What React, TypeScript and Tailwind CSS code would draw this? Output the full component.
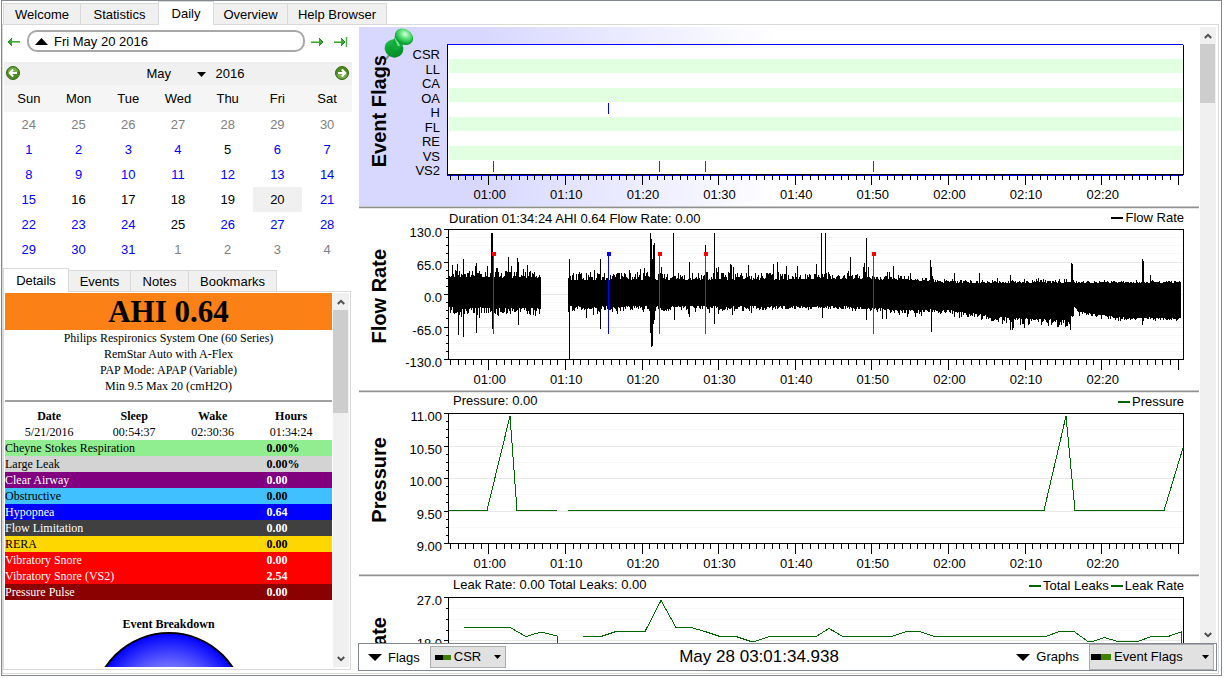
import React from 'react';

type Tab = { name: string; width: string };

const MAIN_TABS: Tab[] = [
  { name: 'Welcome', width: 'w-[78px]' },
  { name: 'Statistics', width: 'w-[79px]' },
  { name: 'Daily', width: 'w-[56px]' },
  { name: 'Overview', width: 'w-[75px]' },
  { name: 'Help Browser', width: 'w-[100px]' },
];

const DETAIL_TABS: Tab[] = [
  { name: 'Details', width: 'w-[66px]' },
  { name: 'Events', width: 'w-[63px]' },
  { name: 'Notes', width: 'w-[59px]' },
  { name: 'Bookmarks', width: 'w-[89px]' },
];

const WEEKDAYS = ['Sun', 'Mon', 'Tue', 'Wed', 'Thu', 'Fri', 'Sat'];
const TIMES = ['01:00', '01:10', '01:20', '01:30', '01:40', '01:50', '02:00', '02:10', '02:20'];
const FLAGS = ['CSR', 'LL', 'CA', 'OA', 'H', 'FL', 'RE', 'VS', 'VS2'];

const WEEKS = [
  [24, 25, 26, 27, 28, 29, 30],
  [1, 2, 3, 4, 5, 6, 7],
  [8, 9, 10, 11, 12, 13, 14],
  [15, 16, 17, 18, 19, 20, 21],
  [22, 23, 24, 25, 26, 27, 28],
  [29, 30, 31, 1, 2, 3, 4],
];

// days of the month without any recorded session
const EMPTY_DAYS = [5, 16, 17, 18, 19, 20, 25];

const EVENTS = [
  { name: 'Cheyne Stokes Respiration', value: '0.00%', style: 'bg-[#90ee90] text-black' },
  { name: 'Large Leak', value: '0.00%', style: 'bg-[#d3d3d3] text-black' },
  { name: 'Clear Airway', value: '0.00', style: 'bg-[#800080] text-white' },
  { name: 'Obstructive', value: '0.00', style: 'bg-[#40c0ff] text-black' },
  { name: 'Hypopnea', value: '0.64', style: 'bg-[#0000ff] text-white' },
  { name: 'Flow Limitation', value: '0.00', style: 'bg-[#404040] text-white' },
  { name: 'RERA', value: '0.00', style: 'bg-[#ffd700] text-black' },
  { name: 'Vibratory Snore', value: '0.00', style: 'bg-[#ff0000] text-white' },
  { name: 'Vibratory Snore (VS2)', value: '2.54', style: 'bg-[#ff0000] text-white' },
  { name: 'Pressure Pulse', value: '0.00', style: 'bg-[#8b0000] text-white' },
];

const SNORES = [45, 211, 257, 425];
const HYPOPNEA = 160;

// [x, top, bottom, top jitter, bottom jitter]
const ENVELOPE = [
  [0, 47, 78, 7, 7],
  [92, 48, 79, 7, 7],
  [120, 50, 77, 8, 6],
  [300, 50, 77, 8, 5],
  [390, 49, 77, 5, 3],
  [460, 50, 81, 5, 4],
  [495, 53, 80, 3, 4],
  [550, 53, 88, 3, 7],
  [620, 53, 91, 3, 8],
  [626, 53, 78, 3, 10],
  [632, 53, 83, 2, 3],
  [670, 53, 88, 2, 4],
  [733, 53, 89, 2, 2],
];

const PEAKS: Record<number, number> = {
  9: 35, 15: 30, 28: 34, 43: 4, 44: 4, 49: 39, 60: 28, 69: 29, 70: 33, 121: 30, 152: 30,
  202: 4, 203: 10, 204: 30, 205: 16, 206: 14, 225: 4, 241: 33, 257: 16, 266: 4, 282: 35,
  283: 36, 300: 36, 325: 35, 329: 33, 338: 37, 349: 37, 368: 35, 373: 4, 377: 4, 402: 28,
  415: 38, 416: 34, 418: 9, 420: 38, 445: 37, 482: 31, 483: 38, 506: 44, 531: 44, 562: 46,
  623: 34, 624: 35, 694: 30, 695: 32, 702: 46,
};

const DIPS: Record<number, number> = {
  10: 106, 15: 108, 28: 104, 44: 100, 70: 96, 121: 130, 138: 89, 152: 100, 202: 104, 203: 118,
  204: 117, 205: 95, 206: 91, 226: 91, 241: 88, 266: 95, 374: 89, 418: 91, 434: 90, 438: 90,
  483: 103, 562: 101, 564: 101, 576: 99, 622: 101, 672: 92, 694: 96,
};

function buildFlow(from: number, to: number) {
  let seed = 17 + from;
  const rnd = () => {
    seed = (seed * 1103515245 + 12345) % 2147483648;
    return seed / 2147483648;
  };
  let d = '';
  for (let x = from; x < to; x++) {
    let i = 0;
    while (i < ENVELOPE.length - 2 && ENVELOPE[i + 1][0] <= x) i++;
    const a = ENVELOPE[i];
    const b = ENVELOPE[i + 1];
    const t = (x - a[0]) / (b[0] - a[0]);
    const at = (k: number) => a[k] + (b[k] - a[k]) * t;
    let top = at(1) - Math.pow(rnd(), 1.5) * at(3) + 1;
    let bottom = at(2) + Math.pow(rnd(), 1.5) * at(4);
    if (rnd() > 0.9) top -= at(3) * 0.8;
    if (rnd() > 0.92) bottom += at(4) * 0.8;
    top = Math.round(PEAKS[x] ?? top);
    bottom = Math.round(DIPS[x] ?? bottom);
    d += `M${x} ${top}h1V${bottom}h-1z`;
  }
  return d;
}

const FLOW = buildFlow(1, 93) + buildFlow(120, 733);

const PRESSURE = [
  'M0 97.5H39L62 3L69 97.5H109',
  'M120 97.5H596L618 3L627 97.5H716L735 35',
];

const LEAK = [
  'M16 30.5H62L78 39.5L93 35L109 39V48',
  'M135 39.5H153L168 34.5H197L213 3.5L228 30.5H243L257 34.5L272 39.5H288L303 44.5H307L321 39.5H368L381 31.5L395 39.5H444L458 34.5H472L486 39.5H598L611 34.5H626L640 44.5H645L656 40.5L670 44.5H690L703 39.5H720L733 35V48',
];

function TabBar({ tabs, active }: { tabs: Tab[]; active: string }) {
  return (
    <div role="tablist" className="flex items-end pl-px">
      {tabs.map(({ name, width }) =>
        name === active ? (
          <button
            key={name}
            role="tab"
            aria-selected="true"
            className={`relative -mb-px h-6 border border-b-0 border-[#d9d9d9] bg-white not-first:-ml-px ${width}`}
          >
            {name}
          </button>
        ) : (
          <button
            key={name}
            role="tab"
            aria-selected="false"
            className={`h-[21px] border border-b-0 border-[#d9d9d9] bg-[#f0f0f0] pt-px not-first:-ml-px ${width}`}
          >
            {name}
          </button>
        ),
      )}
    </div>
  );
}

function Caret({ className }: { className: string }) {
  return (
    <svg viewBox="0 0 10 5" className={className} preserveAspectRatio="none" aria-hidden="true">
      <path d="M0 0h10L5 5z" fill="#000" />
    </svg>
  );
}

function ScrollBar({ thumb }: { thumb: string }) {
  return (
    <div className="flex w-4 shrink-0 flex-col bg-[#f0f0f0]">
      <div className="flex h-[17px] items-center justify-center">
        <svg width="8" height="6" viewBox="0 0 8 6" aria-hidden="true">
          <path d="M.8 5L4 1.8 7.2 5" fill="none" stroke="#505050" strokeWidth="2" />
        </svg>
      </div>
      <div className={`mr-px bg-[#cdcdcd] ${thumb}`} />
      <div className="mt-auto flex h-[17px] items-center justify-center">
        <svg width="8" height="6" viewBox="0 0 8 6" aria-hidden="true">
          <path d="M.8 1L4 4.2 7.2 1" fill="none" stroke="#505050" strokeWidth="2" />
        </svg>
      </div>
    </div>
  );
}

function ArrowIcon({ flip, bar }: { flip?: boolean; bar?: boolean }) {
  return (
    <svg width="14" height="12" viewBox="0 0 14 12" className={flip ? 'rotate-180' : ''} aria-hidden="true">
      <path d="M1 5h8V2l4 4-4 4V7H1z" transform={bar ? 'translate(-2 0)' : undefined} fill="#3fa535" />
      <path d={bar ? 'M0 5.5h7' : 'M1 5.5h8'} stroke="#8ad873" />
      <path d={bar ? 'M7 2l4 4-4 4' : 'M9 2l4 4-4 4'} fill="none" stroke="#23862a" />
      {bar && <path d="M12.500 1v10" stroke="#55ad48" strokeWidth="1.500" />}
    </svg>
  );
}

function RoundArrow({ flip }: { flip?: boolean }) {
  return (
    <svg width="14" height="14" viewBox="0 0 14 14" className={flip ? 'rotate-180' : ''} aria-hidden="true">
      <circle cx="7" cy="7" r="6.5" fill="#4c8a22" stroke="#356b14" />
      <path d="M2 6a5 4.500 0 0 1 10 0z" fill="#79b04a" />
      <path d="M11 7H4M7.200 3.500L3.700 7l3.500 3.500" fill="none" stroke="#fff" strokeWidth="2" />
    </svg>
  );
}

function PinIcon() {
  return (
    <svg width="30" height="34" viewBox="0 0 30 34" aria-hidden="true">
      <defs>
        <radialGradient id="pinCap" cx="0.5" cy="0.35" r="0.65">
          <stop offset="0" stopColor="#dcffe0" />
          <stop offset="0.45" stopColor="#5fe37c" />
          <stop offset="1" stopColor="#0aa834" />
        </radialGradient>
        <linearGradient id="pinBody" x1="0" y1="0" x2="1" y2="0.6">
          <stop offset="0" stopColor="#35c35b" />
          <stop offset="0.5" stopColor="#0aa535" />
          <stop offset="1" stopColor="#068a28" />
        </linearGradient>
      </defs>
      <path d="M7 25L1 32" stroke="#8c8c98" strokeWidth="2" />
      <ellipse cx="10" cy="20.500" rx="9.500" ry="9" transform="rotate(35 10 20.500)" fill="url(#pinBody)" />
      <path d="M11 8l8 9-5 5c-4 1-7-2-6-5z" fill="#14a83c" />
      <path d="M11 9l4 9" stroke="#6ee68a" strokeWidth="2" />
      <ellipse cx="20" cy="9" rx="9.500" ry="7.500" transform="rotate(30 20 9)" fill="#0b9c31" />
      <ellipse cx="20" cy="8" rx="9" ry="7" transform="rotate(30 20 8)" fill="url(#pinCap)" />
    </svg>
  );
}

function Calendar() {
  return (
    <div className="ml-px">
      <div className="flex h-[23px] items-start justify-between bg-[#f0f0f0] pr-[3px] pl-0.5">
        <button aria-label="Previous month" className="pt-1">
          <RoundArrow />
        </button>
        <div className="flex items-center gap-[10px] pt-1 pl-9 leading-4">
          <span className="relative flex items-center">
            <select aria-label="Month" className="w-[59px] appearance-none bg-transparent outline-none" defaultValue="May">
              <option>May</option>
            </select>
            <Caret className="pointer-events-none absolute right-0 h-[5px] w-[9px]" />
          </span>
          <button>2016</button>
        </div>
        <button aria-label="Next month" className="pt-1">
          <RoundArrow flip />
        </button>
      </div>
      <table className="w-full table-fixed text-center">
        <thead>
          <tr className="h-[27px] bg-[#f5f5f5]">
            {WEEKDAYS.map((day) => (
              <th key={day} className="font-normal">
                {day}
              </th>
            ))}
          </tr>
        </thead>
        <tbody>
          {WEEKS.map((week, row) => (
            <tr key={row} className="h-[25px]">
              {week.map((day) => {
                const outside = (row === 0 && day > 7) || (row === 5 && day < 7);
                const color = outside ? 'text-[#808080]' : EMPTY_DAYS.includes(day) ? 'text-black' : 'text-[#0000ff]';
                return (
                  <td key={day} className={`${color} ${row === 3 && day === 20 ? 'bg-[#f0f0f0]' : ''}`}>
                    {day}
                  </td>
                );
              })}
            </tr>
          ))}
        </tbody>
      </table>
    </div>
  );
}

function Details() {
  return (
    <div className="mr-px flex min-h-0 flex-1 border border-[#d9d9d9] px-px pt-px pb-0.5">
      <div className="mr-px min-w-0 flex-1 overflow-hidden font-['Liberation_Serif',serif] text-xs leading-4">
        <h1 className="h-[37px] bg-[#fb8117] text-center text-[31px] leading-[37px] font-bold">AHI 0.64</h1>
        <div className="text-center">
          <p>Philips Respironics System One (60 Series)</p>
          <p>RemStar Auto with A-Flex</p>
          <p>PAP Mode: APAP (Variable)</p>
          <p>Min 9.5 Max 20 (cmH2O)</p>
        </div>
        <hr className="my-1.5 border-t-2 border-[#a0a0a0]" />
        <table className="w-full table-fixed text-center">
          <thead>
            <tr>
              <th className="w-[27%]">Date</th>
              <th className="w-[25%]">Sleep</th>
              <th className="w-[23%]">Wake</th>
              <th className="w-[25%]">Hours</th>
            </tr>
          </thead>
          <tbody>
            <tr>
              <td>5/21/2016</td>
              <td>00:54:37</td>
              <td>02:30:36</td>
              <td>01:34:24</td>
            </tr>
          </tbody>
        </table>
        <table className="w-full table-fixed">
          <tbody>
            {EVENTS.map((event) => (
              <tr key={event.name} className={event.style}>
                <td className="w-4/5">{event.name}</td>
                <td className="font-bold">{event.value}</td>
              </tr>
            ))}
          </tbody>
        </table>
        <h2 className="mt-4 text-center font-bold">Event Breakdown</h2>
        <svg width="154" height="154" viewBox="0 0 154 154" className="mx-auto" aria-hidden="true">
          <defs>
            <radialGradient id="pie">
              <stop offset="0" stopColor="#ffffff" />
              <stop offset="1" stopColor="#0000ff" />
            </radialGradient>
          </defs>
          <circle cx="77" cy="77" r="76" fill="url(#pie)" stroke="#000" strokeWidth="2" />
        </svg>
      </div>
      <ScrollBar thumb="h-[103px]" />
    </div>
  );
}

function Axis({ steps, every }: { steps: number; every: number }) {
  const ticks = Array.from({ length: 96 }, (_, i) => i);
  const rows = Array.from({ length: steps + 1 }, (_, i) => i);
  return (
    <g fill="#000">
      {ticks.map((i) => (
        <rect key={i} x={Math.round(2 + i * 7.66)} y={131} width={1} height={i % 10 === 5 ? 10 : 5} />
      ))}
      {steps > 0 &&
        rows.map((i) => (
          <rect
            key={i}
            x={i % every === 0 ? -4 : -2}
            y={Math.round((i * 130) / steps)}
            width={i % every === 0 ? 4 : 2}
            height={1}
          />
        ))}
    </g>
  );
}

function Grid({ steps, every }: { steps: number; every: number }) {
  return (
    <g>
      {Array.from({ length: steps - 1 }, (_, i) => i + 1).map((i) => (
        <rect
          key={i}
          x={1}
          y={Math.round((i * 130) / steps)}
          width={734}
          height={1}
          fill={i % every === 0 ? '#e8e8e8' : '#f7f7f7'}
        />
      ))}
    </g>
  );
}

function Plot({ label, children }: { label: string; children: React.ReactNode }) {
  return (
    <div className="min-w-0 flex-1">
      <svg
        role="img"
        aria-label={label}
        viewBox="-4 0 740 142"
        preserveAspectRatio="none"
        shapeRendering="crispEdges"
        className="block h-[142px] w-full"
      >
        {children}
      </svg>
      <div className="flex pt-px pl-[1%] leading-4">
        {TIMES.map((time) => (
          <span key={time} className="w-[10.46%] text-center">
            {time}
          </span>
        ))}
      </div>
    </div>
  );
}

function Title({ children }: { children: string }) {
  return (
    <div className="flex h-[134px] w-10 shrink-0 items-center justify-center">
      <h2 className="rotate-180 text-xl leading-5 font-bold whitespace-nowrap [writing-mode:vertical-rl]">{children}</h2>
    </div>
  );
}

type GraphProps = {
  title: string;
  note: string;
  noteStyle: string;
  legend: string[];
  lineStyle: string;
  labels: string[];
  minor: number;
  gridEvery?: number;
  children: React.ReactNode;
};

function Graph({ title, note, noteStyle, legend, lineStyle, labels, minor, gridEvery = 1, children }: GraphProps) {
  const steps = (labels.length - 1) * minor;
  return (
    <section className="shrink-0 pr-[15px] pb-0.5">
      <div className="flex h-5 justify-between">
        <span className={`leading-4 ${noteStyle}`}>{note}</span>
        <span className="flex h-[18px]">
          {legend.map((name) => (
            <span key={name} className="flex items-center">
              <i className={`ml-0.5 h-0.5 w-3 ${lineStyle}`} />
              <span className="pl-0.5">{name}</span>
            </span>
          ))}
        </span>
      </div>
      <div className="flex">
        <Title>{title}</Title>
        <div className="flex h-[138px] w-[45px] shrink-0 flex-col justify-between pr-0.5 text-right leading-2">
          {labels.map((value) => (
            <span key={value}>{value}</span>
          ))}
        </div>
        <Plot label={title}>
          <Grid steps={steps / gridEvery} every={minor / gridEvery} />
          {children}
          <path d="M.5.5H735.500V130.500H.5z" fill="none" stroke="#000" />
          <Axis steps={steps} every={minor} />
        </Plot>
      </div>
    </section>
  );
}

function EventFlags() {
  return (
    <section className="relative shrink-0 bg-linear-to-r from-[#d8d8ff] from-15% to-white to-50% pt-[17px] pr-[15px] pb-[3px]">
      <div className="absolute top-px left-[25px]">
        <PinIcon />
      </div>
      <div className="flex">
        <Title>Event Flags</Title>
        <div className="flex h-[134px] w-[45px] shrink-0 flex-col justify-between pt-1 pr-1 text-right leading-[14px]">
          {FLAGS.map((flag) => (
            <span key={flag}>{flag}</span>
          ))}
        </div>
        <Plot label="Event Flags">
          <rect x="0" y="0" width="735" height="131" fill="#fff" />
          {[15, 44, 73, 102].map((y) => (
            <rect key={y} x="1" y={y} width="734" height="14" fill="#e2ffe2" />
          ))}
          <rect x={HYPOPNEA} y="59" width="1" height="11" fill="#0000ff" />
          {SNORES.map((x) => (
            <rect key={x} x={x} y="117" width="1" height="11" fill="#e00000" />
          ))}
          <path d="M-1 .5H735M-1 131.500H735" stroke="#0000ff" />
          <path d="M-.5 1V131M735.500 1V131M-1 130.500H736" stroke="#000" />
          <Axis steps={0} every={1} />
        </Plot>
      </div>
    </section>
  );
}

function Divider() {
  return <div className="h-[3px] shrink-0 border-y border-t-[#c8c8c8] border-b-[#e6e6e6] bg-[#909090]" />;
}

function Marker({ x, color }: { x: number; color: string }) {
  return (
    <g fill={color}>
      <rect x={x} y="24" width="1" height="81" />
      <rect x={x - 1} y="23" width="4" height="4" />
    </g>
  );
}

function Swatch({ size }: { size: string }) {
  return (
    <span className={`flex shrink-0 ${size}`}>
      <i className="flex-1 bg-black" />
      <i className="flex-1 bg-[#408000]" />
    </span>
  );
}

function BottomBar() {
  return (
    <div className="flex h-7 shrink-0 items-center border border-[#828790] bg-white">
      <button className="ml-[9px] flex items-center gap-1.5 pt-px">
        <Caret className="h-[7px] w-[14px]" />
        Flags
      </button>
      <div className="relative ml-[10px] flex h-[22px] w-[76px] items-center gap-[3px] border border-[#adadad] bg-[#e1e1e1] pl-1">
        <Swatch size="h-[5px] w-4" />
        <select aria-label="Flags" className="h-5 flex-1 appearance-none bg-transparent outline-none" defaultValue="CSR">
          <option>CSR</option>
        </select>
        <Caret className="pointer-events-none absolute right-1 h-1 w-[7px]" />
      </div>
      <output className="flex-1 pr-1 text-center text-[17px]">May 28 03:01:34.938</output>
      <button className="flex items-center gap-1.5">
        <Caret className="h-[7px] w-[14px]" />
        Graphs
      </button>
      <div className="relative mr-0.5 ml-[10px] flex h-[26px] w-[125px] items-center gap-[3px] border border-[#adadad] bg-[#e1e1e1] pl-px">
        <Swatch size="h-1.5 w-5" />
        <select aria-label="Graphs" className="h-5 flex-1 appearance-none bg-transparent outline-none" defaultValue="Event Flags">
          <option>Event Flags</option>
        </select>
        <Caret className="pointer-events-none absolute right-1 h-1 w-[7px]" />
      </div>
    </div>
  );
}

export default function App() {
  return (
    <div className="h-screen overflow-hidden bg-white pr-0.5 pb-0.5 pl-px font-['Liberation_Sans',Arial,sans-serif] text-[13px] text-black">
      <div className="flex h-full flex-col border border-[#828790] pr-0.5 pb-px">
        <TabBar tabs={MAIN_TABS} active="Daily" />
        <main className="flex min-h-0 flex-1 border border-[#d9d9d9]">
          <aside className="flex w-[349px] shrink-0 flex-col pb-[3px]">
            <div className="flex h-[37px] items-start gap-1 px-1 pt-[5px]">
              <button aria-label="Previous day" className="flex h-6 items-center">
                <ArrowIcon flip />
              </button>
              <button className="ml-0.5 flex h-[22px] flex-1 items-center gap-[6px] rounded-[10px] border-2 border-[#a8a8a8] bg-white pt-px pl-1.5">
                <Caret className="h-[7px] w-[13px] rotate-180" />
                Fri May 20 2016
              </button>
              <button aria-label="Next day" className="ml-px flex h-6 items-center">
                <ArrowIcon />
              </button>
              <button aria-label="Most recent day" className="ml-1.5 flex h-6 items-center">
                <ArrowIcon bar />
              </button>
            </div>
            <Calendar />
            <div className="mt-[6px] -ml-px">
              <TabBar tabs={DETAIL_TABS} active="Details" />
            </div>
            <Details />
          </aside>
          <div className="ml-[6px] flex min-w-0 flex-1 flex-col pt-0.5 pr-px pb-0.5">
            <div className="mx-px flex min-h-0 flex-1">
              <div className="mr-px flex min-w-0 flex-1 flex-col overflow-hidden">
                <EventFlags />
                <Divider />
                <Graph
                  title="Flow Rate"
                  note="Duration 01:34:24 AHI 0.64 Flow Rate: 0.00"
                  noteStyle="pt-0.5 pl-[90px]"
                  legend={['Flow Rate']}
                  lineStyle="bg-black"
                  labels={['130.0', '65.0', '0.0', '-65.0', '-130.0']}
                  minor={4}
                >
                  <path d={FLOW} fill="#000" />
                  {SNORES.map((x) => (
                    <Marker key={x} x={x} color="#ff0000" />
                  ))}
                  <Marker x={HYPOPNEA} color="#0000ff" />
                </Graph>
                <Divider />
                <Graph
                  title="Pressure"
                  note="Pressure: 0.00"
                  noteStyle="pl-[94px]"
                  legend={['Pressure']}
                  lineStyle="bg-[#006400]"
                  labels={['11.00', '10.50', '10.00', '9.50', '9.00']}
                  minor={4}
                  gridEvery={2}
                >
                  {PRESSURE.map((d) => (
                    <path key={d} d={d} fill="none" stroke="#006400" />
                  ))}
                </Graph>
                <Divider />
                <Graph
                  title="Leak Rate"
                  note="Leak Rate: 0.00 Total Leaks: 0.00"
                  noteStyle="pl-[94px]"
                  legend={['Total Leaks', 'Leak Rate']}
                  lineStyle="bg-[#006400]"
                  labels={['27.0', '18.0', '9.0', '0.0']}
                  minor={4}
                >
                  {LEAK.map((d) => (
                    <path key={d} d={d} fill="none" stroke="#006400" />
                  ))}
                </Graph>
              </div>
              <ScrollBar thumb="h-[59px]" />
            </div>
            <BottomBar />
          </div>
        </main>
      </div>
    </div>
  );
}
